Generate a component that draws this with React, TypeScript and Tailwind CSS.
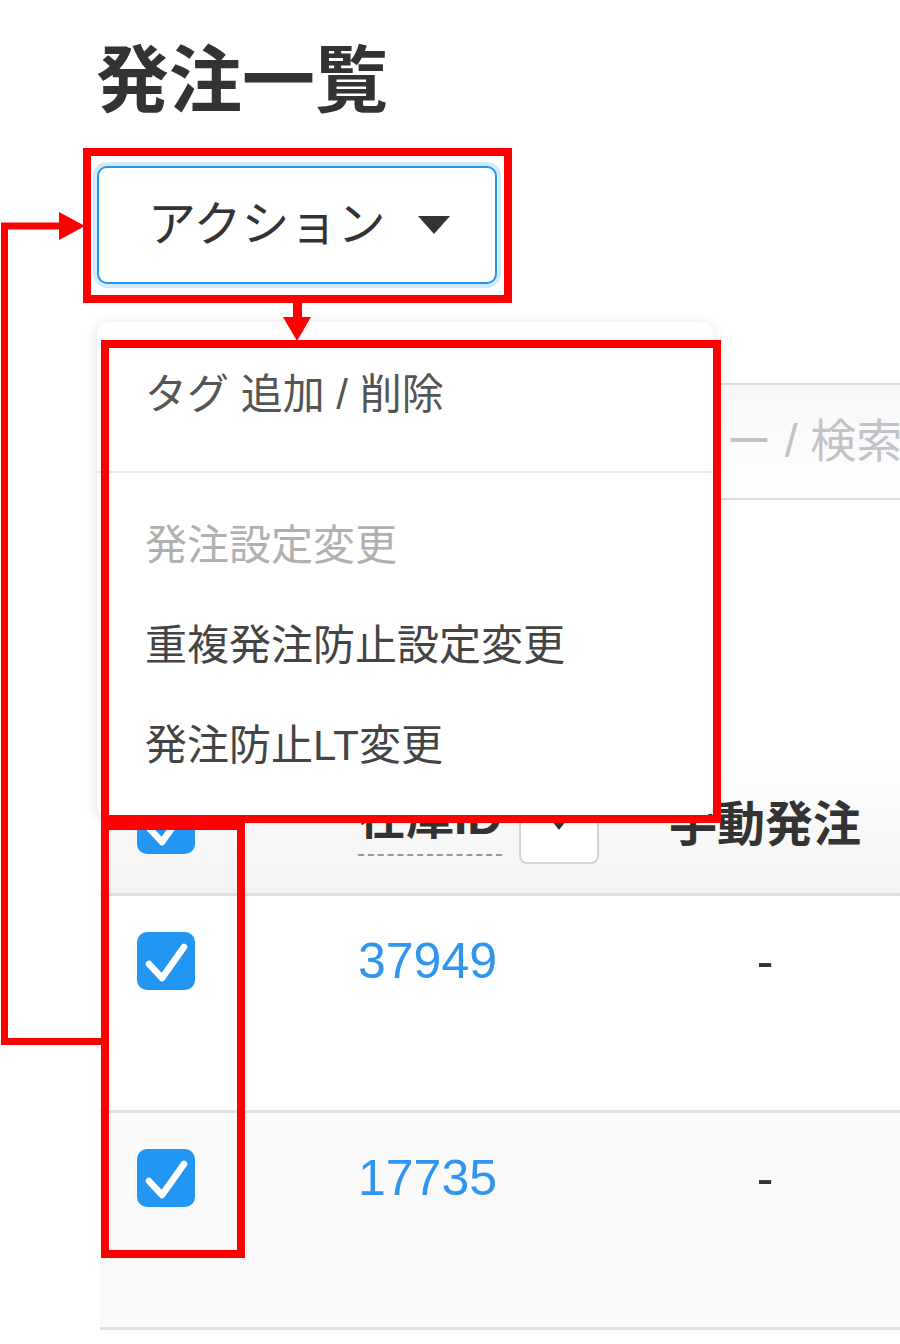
import React from 'react';

const CheckBox = () => (
  <span className="flex h-[58px] w-[58px] items-center justify-center rounded-[10px] bg-[#2196f3]">
    <svg viewBox="0 0 58 58" className="h-[58px] w-[58px]">
      <path d="M12 32 L25 46 L47 15" fill="none" stroke="#fff" strokeWidth={6.5} strokeLinecap="round" strokeLinejoin="round" />
    </svg>
  </span>
);

const rows = [
  { id: '37949', manual: '-', striped: false },
  { id: '17735', manual: '-', striped: true },
];

const menuItems = [
  { label: '発注設定変更', disabled: true },
  { label: '重複発注防止設定変更', disabled: false },
  { label: '発注防止LT変更', disabled: false },
];

export default function App() {
  return (
    <div className="relative h-[1344px] w-[900px] overflow-hidden bg-white pt-[41px] text-[#333] [font-family:'Liberation_Sans','Noto_Sans_CJK_JP',sans-serif]">
      {/* Title */}
      <h1 className="ml-[96px] text-[73px] font-bold leading-[80px] text-[#333]">発注一覧</h1>

      {/* Action dropdown */}
      <div className="relative z-10 ml-[97px] mt-[45px] w-[400px]">
        <button className="flex h-[118px] w-[400px] items-center rounded-[10px] border-2 border-[#2196f3] bg-white pl-[49px] text-[48px] text-[#333] shadow-[0_0_0_4px_rgba(33,150,243,0.2)]">
          アクション
          <svg viewBox="0 0 32 18" className="ml-[32px] h-[18px] w-[32px]">
            <path d="M0 0 H32 L16 18 Z" fill="#333" />
          </svg>
        </button>

        <div className="absolute left-0 top-full mt-[38px] w-[616px] rounded-[12px] bg-white py-[22px] shadow-[0_2px_14px_rgba(0,0,0,0.13)]">
          <div className="flex h-[100px] items-center pl-[48px] text-[42px] text-[#555]">タグ 追加 / 削除</div>
          <div className="mb-[22px] mt-[27px] h-[2px] bg-[#ebebeb]" />
          {menuItems.map((item) => (
            <div
              key={item.label}
              className={`flex h-[100px] items-center pl-[48px] text-[42px] ${item.disabled ? 'text-[#b0b0b0]' : 'text-[#444]'}`}
            >
              {item.label}
            </div>
          ))}
        </div>
      </div>

      {/* Search box (mostly hidden behind the menu) */}
      <div className="ml-[416px] mt-[99px] flex h-[117px] w-[484px] items-center whitespace-nowrap border-y-2 border-l-2 border-[#dcdcdc] bg-gradient-to-b from-[#f7f7f7] to-white pl-[124px] text-[46px] text-[#c2c2c8]">
        カテゴリー / 検索
      </div>

      {/* Table */}
      <div className="ml-[100px] mt-[257px] w-[800px]">
        <div className="flex h-[139px] items-center border-b-[3px] border-[#dedede] bg-gradient-to-b from-white to-[#f3f3f3]">
          <div className="w-[258px] shrink-0 pl-[37px]">
            <CheckBox />
          </div>
          <div className="flex w-[307px] shrink-0 items-center">
            <span className="border-b-2 border-dashed border-[#999] pb-[12px] text-[48px] font-bold leading-[48px]">在庫ID</span>
            <span className="ml-[17px] flex h-[78px] w-[80px] items-center justify-center rounded-[8px] border-2 border-[#d4d4d4] bg-white">
              <svg viewBox="0 0 14 9" className="h-[9px] w-[14px]">
                <path d="M0 0 H14 L7 9 Z" fill="#333" />
              </svg>
            </span>
          </div>
          <div className="w-[200px] shrink-0 whitespace-nowrap text-center text-[48px] font-bold leading-[48px]">手動発注</div>
        </div>

        {rows.map((row) => (
          <div
            key={row.id}
            className={`flex h-[217px] items-start border-b-[3px] border-[#e2e2e2] pt-[36px] ${row.striped ? 'bg-[#fafafa]' : 'bg-white'}`}
          >
            <div className="w-[258px] shrink-0 pl-[37px]">
              <CheckBox />
            </div>
            <div className="w-[307px] shrink-0 text-[50px] leading-[58px] text-[#2f95ee]">{row.id}</div>
            <div className="w-[200px] shrink-0 text-center text-[50px] leading-[58px] text-[#333]">{row.manual}</div>
          </div>
        ))}
      </div>

      {/* Red annotations */}
      <div className="pointer-events-none absolute left-[83px] top-[148px] z-20 h-[155px] w-[429px] border-[8px] border-[#ff0000]" />
      <div className="pointer-events-none absolute left-[101px] top-[340px] z-20 h-[483px] w-[620px] border-[8px] border-[#ff0000]" />
      <div className="pointer-events-none absolute left-[101px] top-[822px] z-20 h-[436px] w-[144px] border-[8px] border-[#ff0000]" />
      <svg viewBox="0 0 900 1344" className="pointer-events-none absolute left-0 top-0 z-20 h-[1344px] w-[900px]">
        <rect x={293} y={302} width={9} height={17} fill="#ff0000" />
        <path d="M283 317 H311 L297 341 Z" fill="#ff0000" />
        <path d="M105 1041.5 H4.5 V226 H62" fill="none" stroke="#ff0000" strokeWidth={7} />
        <path d="M59 212 V240 L85 226 Z" fill="#ff0000" />
      </svg>
    </div>
  );
}
